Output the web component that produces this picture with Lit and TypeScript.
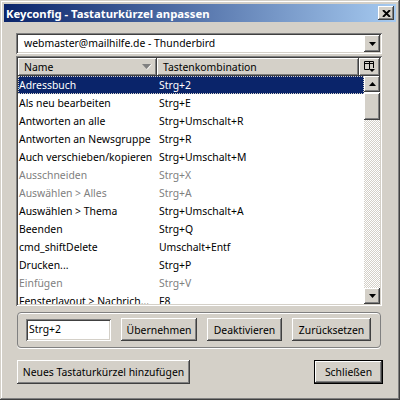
import { LitElement, html, css } from "lit";
import { customElement } from "lit/decorators.js";

const rows: [string, string, boolean?][] = [
  ["Adressbuch", "Strg+2"],
  ["Als neu bearbeiten", "Strg+E"],
  ["Antworten an alle", "Strg+Umschalt+R"],
  ["Antworten an Newsgruppe", "Strg+R"],
  ["Auch verschieben/kopieren", "Strg+Umschalt+M"],
  ["Ausschneiden", "Strg+X", true],
  ["Auswählen > Alles", "Strg+A", true],
  ["Auswählen > Thema", "Strg+Umschalt+A"],
  ["Beenden", "Strg+Q"],
  ["cmd_shiftDelete", "Umschalt+Entf"],
  ["Drucken...", "Strg+P"],
  ["Einfügen", "Strg+V", true],
  ["Fensterlayout > Nachrich...", "F8"],
];

@customElement("app-root")
export class AppRoot extends LitElement {
  static styles = css`
    :host {
      display: block;
      width: 400px;
      height: 400px;
      font-family: "Noto Sans", sans-serif;
      font-size: 10.4px;
      color: #000;
      overflow: hidden;
    }
    * { box-sizing: border-box; }
    .win {
      width: 400px; height: 400px; background: #d4d0c8; padding: 4px;
      box-shadow: inset -1px -1px 0 #404040, inset 1px 1px 0 #d4d0c8, inset -2px -2px 0 #808080, inset 2px 2px 0 #fff;
      display: flex; flex-direction: column;
    }
    .title {
      height: 18px; flex: none; display: flex; align-items: center; justify-content: space-between;
      background: linear-gradient(90deg, #0a246a, #a6caf0);
      color: #fff; font-weight: bold; padding: 0 2px 0 2px; font-size: 11.3px;
    }
    .close {
      width: 16px; height: 14px; background: #d4d0c8; display: flex; align-items: center; justify-content: center;
      box-shadow: inset -1px -1px 0 #404040, inset 1px 1px 0 #fff, inset -2px -2px 0 #808080;
    }
    .body { flex: 1; padding: 11px 12px 0 12px; display: flex; flex-direction: column; }
    .sunken {
      box-shadow: inset 1px 1px 0 #808080, inset -1px -1px 0 #fff, inset 2px 2px 0 #404040, inset -2px -2px 0 #d4d0c8;
      background: #fff; padding: 2px;
    }
    .combo { height: 21px; display: flex; width: 366px; }
    .combo .val { flex: 1; padding-left: 6px; line-height: 17px; }
    .arrowbtn {
      width: 16px; flex: none; background: #d4d0c8; display: flex; align-items: center; justify-content: center;
      box-shadow: inset -1px -1px 0 #404040, inset 1px 1px 0 #fff, inset -2px -2px 0 #808080;
    }
    .tree { margin-top: 2px; height: 250px; width: 366px; display: flex; flex-direction: column; }
    .head { display: flex; height: 18px; flex: none; }
    .hc {
      background: #d4d0c8; height: 18px; display: flex; align-items: center; justify-content: space-between; padding: 0 5px 0 6px;
      box-shadow: inset -1px -1px 0 #404040, inset 1px 1px 0 #fff, inset -2px -2px 0 #808080;
      flex: none;
    }
    .h1 { width: 139px; }
    .h2 { width: 202px; }
    .h3 { width: 21px; padding: 0 0 0 1px; justify-content: center; }
    .content { flex: 1; display: flex; min-height: 0; }
    .list { flex: 1; overflow: hidden; }
    .row { height: 18px; display: grid; grid-template-columns: 140px 1fr; align-items: center; padding-left: 1px; white-space: nowrap; }
    .row.sel { background: #0a246a; color: #fff; outline: 1px dotted #d4d0c8; outline-offset: -1px; }
    .row.dis { color: #808080; }
    .scroll { width: 16px; flex: none; display: flex; flex-direction: column; }
    .sb { height: 16px; flex: none; width: 16px; }
    .thumb {
      height: 27px; flex: none; background: #d4d0c8; margin-top: 1px;
      box-shadow: inset -1px -1px 0 #404040, inset 1px 1px 0 #fff, inset -2px -2px 0 #808080;
    }
    .track {
      flex: 1;
      background-color: #fff;
      background-image: conic-gradient(#d4d0c8 25%, transparent 0 50%, #d4d0c8 0 75%, transparent 0);
      background-size: 2px 2px;
    }
    .group {
      margin-top: 6px; margin-left: 1px; width: 364px; height: 36px; border: 1px solid #808080; border-radius: 4px;
      box-shadow: 0 1px 0 #fff, inset 0 1px 0 #fff;
      display: flex; align-items: flex-end; padding: 0 9px 6px 8px;
    }
    .input {
      width: 85px; height: 22px; padding: 2px 0 0 0; flex: none;
    }
    .input span { display: block; padding-left: 3px; line-height: 16px; }
    .btn {
      height: 23px; background: #d4d0c8; display: flex; align-items: center; justify-content: center; flex: none; white-space: nowrap;
      box-shadow: inset -1px -1px 0 #404040, inset 1px 1px 0 #fff, inset -2px -2px 0 #808080;
    }
    .ub { width: 76px; margin-left: 10px; }
    .de { width: 75px; margin-left: 10px; }
    .zu { width: 79px; margin-left: 10px; }
    .foot { margin-top: 12px; display: flex; justify-content: space-between; padding: 0 1px; }
    .neu { width: 173px; height: 24px; }
    .sch { width: 69px; height: 24px; border: 1px solid #000; box-shadow: inset -1px -1px 0 #404040, inset 1px 1px 0 #fff, inset -2px -2px 0 #808080; }
  `;

  render() {
    const up = html`<svg width="7" height="4" viewBox="0 0 7 4"><path d="M3.5 0L7 4H0Z" fill="#000"/></svg>`;
    const down = html`<svg width="7" height="4" viewBox="0 0 7 4"><path d="M0 0H7L3.5 4Z" fill="#000"/></svg>`;
    return html`
      <div class="win">
        <div class="title">
          <span>Keyconfig - Tastaturkürzel anpassen</span>
          <div class="close"><svg width="9" height="7" viewBox="0 0 9 7"><path d="M1 0L8 7M8 0L1 7" stroke="#000" stroke-width="1.9"/></svg></div>
        </div>
        <div class="body">
          <div class="sunken combo">
            <div class="val">webmaster@mailhilfe.de - Thunderbird</div>
            <div class="arrowbtn">${down}</div>
          </div>
          <div class="sunken tree">
            <div class="head">
              <div class="hc h1"><span>Name</span><svg width="10" height="6" viewBox="0 0 10 6"><path d="M9.500 0.500L5 5.500" stroke="#fff" fill="none"/><path d="M0 0H9L4.500 5Z" fill="#808080"/></svg></div>
              <div class="hc h2"><span>Tastenkombination</span></div>
              <div class="hc h3"><svg width="12" height="12" viewBox="0 0 12 12"><path d="M0.500 0.500H9.500V7M0.500 2.500H9.500M0.500 0.500V8.500H5M5.500 0.500V8.500" fill="none" stroke="#000"/><path d="M5 8H11L8 11Z" fill="#000"/></svg></div>
            </div>
            <div class="content">
              <div class="list">
                ${rows.map((r, i) => html`<div class="row ${i === 0 ? "sel" : ""} ${r[2] ? "dis" : ""}"><span>${r[0]}</span><span>${r[1]}</span></div>`)}
              </div>
              <div class="scroll">
                <div class="arrowbtn sb">${up}</div>
                <div class="thumb"></div>
                <div class="track"></div>
                <div class="arrowbtn sb">${down}</div>
              </div>
            </div>
          </div>
          <div class="group">
            <div class="sunken input"><span>Strg+2</span></div>
            <div class="btn ub">Übernehmen</div>
            <div class="btn de">Deaktivieren</div>
            <div class="btn zu">Zurücksetzen</div>
          </div>
          <div class="foot">
            <div class="btn neu">Neues Tastaturkürzel hinzufügen</div>
            <div class="btn sch">Schließen</div>
          </div>
        </div>
      </div>
    `;
  }
}
